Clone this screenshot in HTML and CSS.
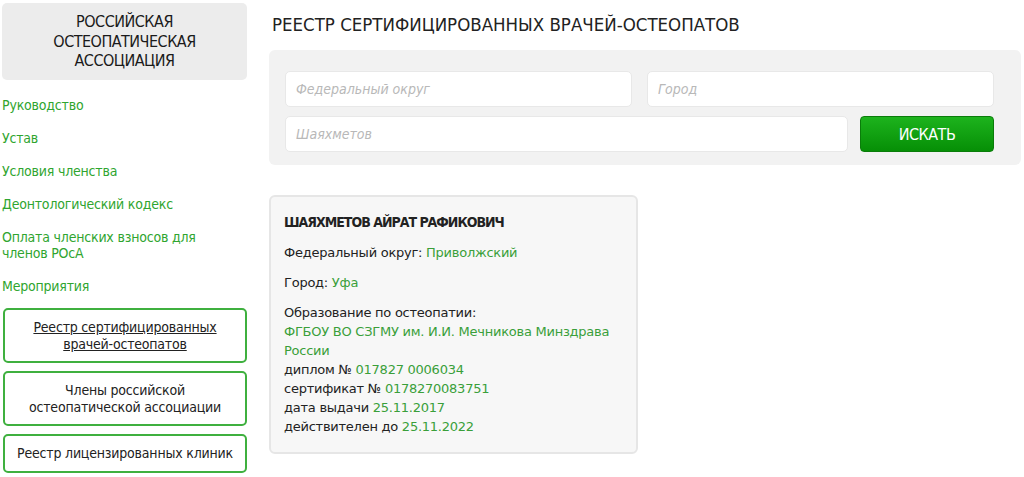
FILE: index.html
```html
<!DOCTYPE html>
<html lang="ru">
<head>
    <meta charset="UTF-8">
    <meta name="viewport" content="width=device-width, initial-scale=1.0">
    <title>Реестр сертифицированных врачей-остеопатов</title>
    <link rel="stylesheet" href="styles.css">
</head>
<body>
    <div class="page">
        <aside class="sidebar">
            <div class="brand">Российская остеопатическая ассоциация</div>
            <ul class="menu">
                <li><a href="#">Руководство</a></li>
                <li><a href="#">Устав</a></li>
                <li><a href="#">Условия членства</a></li>
                <li><a href="#">Деонтологический кодекс</a></li>
                <li><a href="#">Оплата членских взносов для<br>членов РОсА</a></li>
                <li><a href="#">Мероприятия</a></li>
            </ul>
            <div class="side-boxes">
                <a href="#" class="side-box active">Реестр сертифицированных<br>врачей-остеопатов</a>
                <a href="#" class="side-box">Члены российской<br>остеопатической ассоциации</a>
                <a href="#" class="side-box">Реестр лицензированных клиник</a>
            </div>
        </aside>

        <main class="content">
            <h1>Реестр сертифицированных врачей-остеопатов</h1>

            <!-- Search form -->
            <form class="search">
                <div class="search-row">
                    <input type="text" placeholder="Федеральный округ">
                    <input type="text" placeholder="Город">
                </div>
                <div class="search-row">
                    <input type="text" class="wide" placeholder="Шаяхметов">
                    <button type="submit">Искать</button>
                </div>
            </form>

            <!-- Result -->
            <div class="doctor">
                <h2>Шаяхметов Айрат Рафикович</h2>
                <p>Федеральный округ: <span class="val">Приволжский</span></p>
                <p>Город: <span class="val">Уфа</span></p>
                <p>Образование по остеопатии:<br>
                    <span class="val">ФГБОУ ВО СЗГМУ им. И.И. Мечникова Минздрава России</span><br>
                    диплом № <span class="val">017827 0006034</span><br>
                    сертификат № <span class="val">0178270083751</span><br>
                    дата выдачи <span class="val">25.11.2017</span><br>
                    действителен до <span class="val">25.11.2022</span>
                </p>
            </div>
        </main>
    </div>
</body>
</html>
```

FILE: styles.css
```css
:root {
    --green: #2fa52f;
    --green-light: #3a9f3a;
    --dark: #222;
    --panel: #f2f2f2;
    --border: #e6e6e6;
}

* {
    margin: 0;
    padding: 0;
    box-sizing: border-box;
}

body {
    background: #fff;
    color: var(--dark);
    font-family: 'DejaVu Sans Condensed', 'Liberation Sans Narrow', sans-serif;
}

.page {
    display: flex;
    align-items: flex-start;
    padding-left: 2px;
}

.sidebar {
    width: 245px;
    flex-shrink: 0;
    padding-top: 3px;
}

.brand {
    background: #ececec;
    border-radius: 5px;
    height: 77px;
    padding: 0 30px;
    display: flex;
    align-items: center;
    justify-content: center;
    text-align: center;
    text-transform: uppercase;
    font-size: 16px;
    letter-spacing: -0.5px;
    line-height: 19.5px;
    color: #1a1a1a;
}

.menu {
    list-style: none;
    padding-top: 8px;
}

.menu li {
    padding: 8.5px 0;
    font-size: 14px;
    letter-spacing: -0.2px;
    line-height: 16px;
}

.menu a {
    color: var(--green);
    text-decoration: none;
}

.side-boxes {
    display: flex;
    flex-direction: column;
    gap: 8px;
    margin-top: 6px;
    padding-left: 1px;
}

.side-box {
    display: block;
    border: 2px solid #3fb03f;
    border-radius: 5px;
    padding: 8.5px 8px;
    text-align: center;
    font-size: 14px;
    letter-spacing: -0.2px;
    line-height: 17px;
    color: var(--dark);
    text-decoration: none;
}

.side-box:last-child {
    padding: 9px 8px;
}

.side-box.active {
    text-decoration: underline;
}

.content {
    flex: 1;
    padding-left: 22px;
    padding-right: 3px;
}

h1 {
    font-size: 18.5px;
    font-weight: normal;
    text-transform: uppercase;
    line-height: 22px;
    padding: 14px 0 0 3px;
    margin-bottom: 14px;
}

.search {
    background: var(--panel);
    border-radius: 6px;
    padding: 21px 27px 13px 16px;
    display: flex;
    flex-direction: column;
    gap: 9px;
}

.search-row {
    display: flex;
    gap: 15px;
}

.search-row + .search-row {
    gap: 12px;
}

.search input {
    flex: 1;
    height: 36px;
    border: 1px solid #e8e8e8;
    border-radius: 5px;
    background: #fff;
    padding: 0 10px;
    font-family: inherit;
    font-size: 14px;
    font-style: italic;
}

.search input::placeholder {
    color: #b8b8b8;
}

button {
    width: 134px;
    height: 36px;
    border: 1px solid #0a7d0a;
    border-radius: 4px;
    background: linear-gradient(#1db31d, #068f06);
    color: #fff;
    font-family: inherit;
    font-size: 16px;
    letter-spacing: -0.5px;
    text-transform: uppercase;
    cursor: pointer;
}

.doctor {
    width: 369px;
    margin-top: 30px;
    background: #f7f7f7;
    border: 2px solid var(--border);
    border-radius: 6px;
    padding: 15px 13px 16px 13px;
    font-family: 'DejaVu Sans', Verdana, sans-serif;
    font-size: 13px;
    letter-spacing: -0.25px;
    line-height: 19px;
}

.doctor h2 {
    font-family: 'DejaVu Sans Condensed', 'Liberation Sans Narrow', sans-serif;
    font-size: 14px;
    font-weight: bold;
    letter-spacing: -1px;
    text-transform: uppercase;
    line-height: 20px;
    margin-bottom: 11px;
}

.doctor p {
    margin-bottom: 11px;
}

.doctor p:last-child {
    margin-bottom: 0;
}

.val {
    color: var(--green-light);
}
```
